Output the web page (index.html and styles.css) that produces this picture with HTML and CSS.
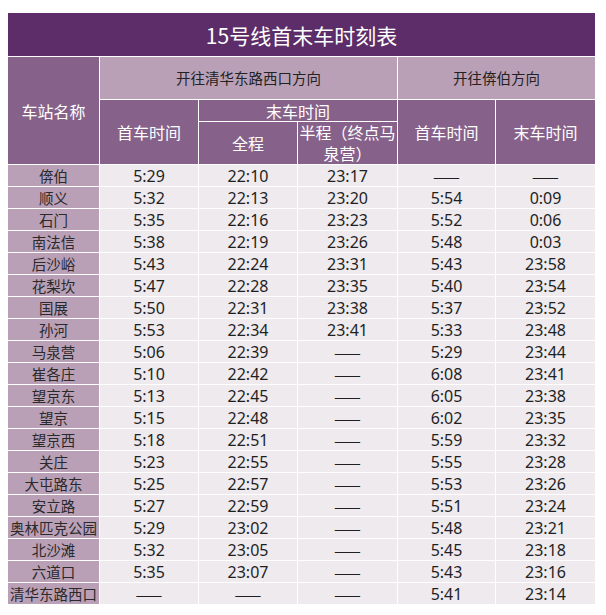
FILE: index.html
```html
<!DOCTYPE html>
<html lang="zh-CN">
<head>
<meta charset="utf-8">
<title>15号线首末车时刻表</title>
<link rel="stylesheet" href="styles.css">
</head>
<body>
<table class="tt">
  <colgroup>
    <col class="c-st"><col class="c-a"><col class="c-a"><col class="c-b"><col class="c-c"><col class="c-b">
  </colgroup>
  <tr class="r-title"><td class="title" colspan="6">15号线首末车时刻表</td></tr>
  <tr class="r-h1">
    <td class="hd" rowspan="3">车站名称</td>
    <td class="hl" colspan="3">开往清华东路西口方向</td>
    <td class="hl" colspan="2">开往倴伯方向</td>
  </tr>
  <tr class="r-h2">
    <td class="hd" rowspan="2">首车时间</td>
    <td class="hd" colspan="2">末车时间</td>
    <td class="hd" rowspan="2">首车时间</td>
    <td class="hd" rowspan="2">末车时间</td>
  </tr>
  <tr class="r-h3">
    <td class="hd">全程</td>
    <td class="hd narrow">半程（终点马泉营）</td>
  </tr>
  <tr><td class="st">倴伯</td><td>5:29</td><td>22:10</td><td>23:17</td><td class="dash">——</td><td class="dash">——</td></tr>
  <tr><td class="st">顺义</td><td>5:32</td><td>22:13</td><td>23:20</td><td>5:54</td><td>0:09</td></tr>
  <tr><td class="st">石门</td><td>5:35</td><td>22:16</td><td>23:23</td><td>5:52</td><td>0:06</td></tr>
  <tr><td class="st">南法信</td><td>5:38</td><td>22:19</td><td>23:26</td><td>5:48</td><td>0:03</td></tr>
  <tr><td class="st">后沙峪</td><td>5:43</td><td>22:24</td><td>23:31</td><td>5:43</td><td>23:58</td></tr>
  <tr><td class="st">花梨坎</td><td>5:47</td><td>22:28</td><td>23:35</td><td>5:40</td><td>23:54</td></tr>
  <tr><td class="st">国展</td><td>5:50</td><td>22:31</td><td>23:38</td><td>5:37</td><td>23:52</td></tr>
  <tr><td class="st">孙河</td><td>5:53</td><td>22:34</td><td>23:41</td><td>5:33</td><td>23:48</td></tr>
  <tr><td class="st">马泉营</td><td>5:06</td><td>22:39</td><td class="dash">——</td><td>5:29</td><td>23:44</td></tr>
  <tr><td class="st">崔各庄</td><td>5:10</td><td>22:42</td><td class="dash">——</td><td>6:08</td><td>23:41</td></tr>
  <tr><td class="st">望京东</td><td>5:13</td><td>22:45</td><td class="dash">——</td><td>6:05</td><td>23:38</td></tr>
  <tr><td class="st">望京</td><td>5:15</td><td>22:48</td><td class="dash">——</td><td>6:02</td><td>23:35</td></tr>
  <tr><td class="st">望京西</td><td>5:18</td><td>22:51</td><td class="dash">——</td><td>5:59</td><td>23:32</td></tr>
  <tr><td class="st">关庄</td><td>5:23</td><td>22:55</td><td class="dash">——</td><td>5:55</td><td>23:28</td></tr>
  <tr><td class="st">大屯路东</td><td>5:25</td><td>22:57</td><td class="dash">——</td><td>5:53</td><td>23:26</td></tr>
  <tr><td class="st">安立路</td><td>5:27</td><td>22:59</td><td class="dash">——</td><td>5:51</td><td>23:24</td></tr>
  <tr><td class="st">奥林匹克公园</td><td>5:29</td><td>23:02</td><td class="dash">——</td><td>5:48</td><td>23:21</td></tr>
  <tr><td class="st">北沙滩</td><td>5:32</td><td>23:05</td><td class="dash">——</td><td>5:45</td><td>23:18</td></tr>
  <tr><td class="st">六道口</td><td>5:35</td><td>23:07</td><td class="dash">——</td><td>5:43</td><td>23:16</td></tr>
  <tr><td class="st">清华东路西口</td><td class="dash">——</td><td class="dash">——</td><td class="dash">——</td><td>5:41</td><td>23:14</td></tr>
</table>
</body>
</html>
```

FILE: styles.css
```css
html, body {
  background: #ffffff;
}
body {
  margin: 12px 0 0 7px;
  font-family: "Noto Sans", "Noto Sans CJK SC", sans-serif;
}
.tt {
  border-collapse: collapse;
  table-layout: fixed;
  width: 588px;
}
.c-st { width: 92px; }
.c-a { width: 99px; }
.c-b { width: 100px; }
.c-c { width: 98px; }
.tt td {
  border: 1px solid #ffffff;
  padding: 0;
  text-align: center;
  vertical-align: middle;
  background: #eeeaee;
  color: #1f1f1f;
  font-size: 16px;
  line-height: 20px;
  height: 21px;
  white-space: nowrap;
}
.tt td.dash {
  font-family: "Noto Sans CJK SC", sans-serif;
  font-size: 16px;
}
.tt td.st {
  background: #b9a0b7;
  color: #2a2a2a;
  font-size: 14.5px;
  font-family: "Noto Sans CJK SC", sans-serif;
}
.tt td.title {
  background: #5c2d69;
  color: #ffffff;
  font-family: "Noto Sans CJK SC", sans-serif;
  font-size: 21px;
  height: 43px;
}
.tt td.hd {
  background: #86628a;
  color: #ffffff;
  font-family: "Noto Sans CJK SC", sans-serif;
  font-size: 16px;
}
.tt td.hl {
  background: #b9a0b7;
  color: #222222;
  font-family: "Noto Sans CJK SC", sans-serif;
  font-size: 14.5px;
}
.r-h1 td { height: 42px; }
.r-h2 td { height: 21px; }
.r-h3 td { height: 42px; }
.tt td.narrow {
  white-space: normal;
  line-height: 21px;
}
```
